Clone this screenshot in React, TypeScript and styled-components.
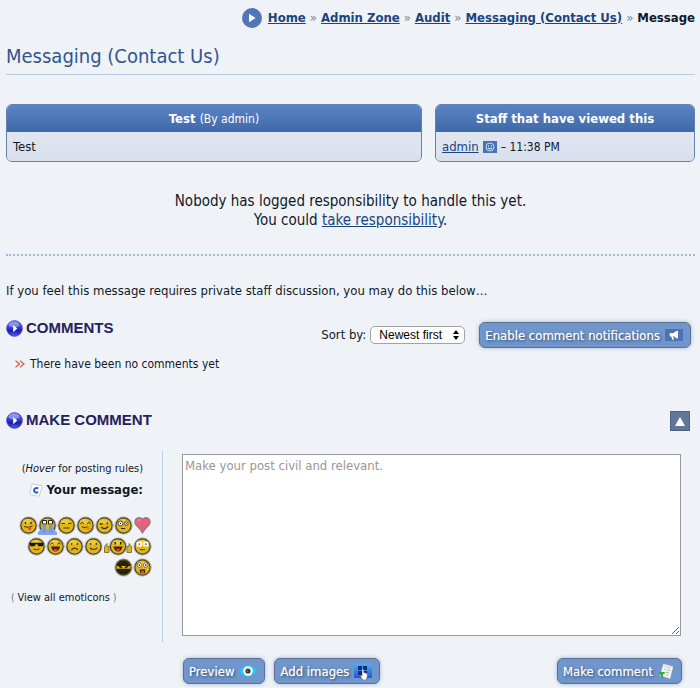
import React from "react";
import styled, { createGlobalStyle } from "styled-components";

const tahoma = `"DejaVu Sans Condensed", Tahoma, "Noto Sans", sans-serif`;
const arial = `"Liberation Sans", Arial, sans-serif`;

const GlobalStyle = createGlobalStyle`
  *, *::before, *::after { box-sizing: border-box; }
  body {
    margin: 0;
    background: #eff3f8;
    color: #111827;
    font-family: ${tahoma};
    font-size: 13px;
    line-height: 16px;
  }
  a { color: #1a4480; }
  svg { display: block; flex: none; }
`;

const Page = styled.main`
  padding: 7px 5px 3px 6px;
`;

const Breadcrumbs = styled.nav`
  display: flex;
  justify-content: flex-end;
  align-items: center;
  gap: 4px;
  height: 21px;
  font-size: 13px;
  font-weight: bold;
  white-space: nowrap;
`;

const CrumbIcon = styled.span`
  margin-right: 2px;
`;

const CrumbSeparator = styled.span`
  color: #81868f;
  font-weight: normal;
`;

const PageTitle = styled.h1`
  margin: 14px 0 0;
  height: 33px;
  border-bottom: 1px solid #bccce6;
  color: #335590;
  font-size: 20px;
  font-weight: normal;
  line-height: 29px;
`;

const Boxes = styled.div`
  display: grid;
  grid-template-columns: 8fr 5fr;
  gap: 13px;
  margin-top: 29px;
`;

const Box = styled.section`
  border: 1px solid #6580ac;
  border-radius: 6px;
  overflow: hidden;
`;

const BoxTitle = styled.h2`
  margin: 0;
  padding: 6px 6px 5px;
  background: linear-gradient(#5a84c5, #3f68a8);
  color: #fff;
  font-size: 13px;
  font-weight: bold;
  line-height: 16px;
  text-align: center;
`;

const Byline = styled.span`
  font-size: 12px;
  font-weight: normal;
  line-height: 1;
`;

const BoxBody = styled.div`
  display: flex;
  align-items: center;
  gap: 4px;
  padding: 7px 6px 6px;
  background: linear-gradient(#e1e7f1, #d9e0ed);
`;

const ViewedTime = styled.span`
  font-size: 12px;
`;

const Responsibility = styled.p`
  margin: 30px 0 0;
  padding-bottom: 24px;
  border-bottom: 2px dotted #9db7dd;
  font-size: 15px;
  line-height: 19px;
  text-align: center;
`;

const Intro = styled.p`
  margin: 27px 0 0;
`;

const SectionRow = styled.div<{ $top: number }>`
  display: flex;
  align-items: flex-start;
  justify-content: space-between;
  margin-top: ${(p) => p.$top}px;
  padding-right: 4px;
`;

const SectionTitle = styled.h3`
  display: flex;
  align-items: center;
  gap: 3px;
  margin: 0;
  color: #26205c;
  font-family: ${arial};
  font-size: 15px;
  line-height: 18px;
`;

const SortTools = styled.div`
  display: flex;
  align-items: center;
  gap: 4px;
  margin-top: 3px;
`;

const SelectWrap = styled.span`
  position: relative;
  margin-right: 10px;
  svg {
    position: absolute;
    right: 6px;
    top: 4px;
    pointer-events: none;
  }
`;

const SortSelect = styled.select`
  display: block;
  appearance: none;
  width: 95px;
  height: 18px;
  padding: 0 8px;
  border: 1px solid #a3a3a3;
  border-radius: 5px;
  background: #fff;
  color: #000;
  font-family: ${arial};
  font-size: 12px;
`;

const Button = styled.button`
  display: inline-flex;
  align-items: center;
  gap: 5px;
  height: 26px;
  padding: 0 7px 0 5px;
  border: 1px solid #5a7194;
  border-radius: 6px;
  background: #7096cc;
  box-shadow: 0 0 4px #a3b2c8;
  color: #fff;
  font-family: ${tahoma};
  font-size: 13px;
  text-shadow: 1px 1px 3px #20354f, 0 0 1px #fff;
  white-space: nowrap;
`;

const CommentNote = styled.p`
  display: flex;
  align-items: center;
  gap: 5px;
  margin: 8px 0 0 9px;
  font-size: 12px;
`;

const Toggle = styled.button`
  display: grid;
  place-items: center;
  width: 20px;
  height: 20px;
  margin-right: 1px;
  padding: 0;
  border: 1px solid #4c6084;
  background: #63779b;
`;

const Form = styled.form`
  display: grid;
  grid-template-columns: 157px 1fr;
  margin-top: 20px;
`;

const Side = styled.div`
  display: flex;
  flex-direction: column;
  height: 191px;
  padding: 10px 10px 0 5px;
  border-right: 1px solid #bccde6;
  text-align: right;
`;

const Rules = styled.div`
  padding-right: 9px;
  font-size: 11px;
`;

const MessageLabel = styled.div`
  display: flex;
  align-items: center;
  justify-content: flex-end;
  gap: 4px;
  margin-top: 5px;
  padding-right: 9px;
  font-size: 13px;
  font-weight: bold;
`;

const Emoticons = styled.div`
  display: flex;
  flex-direction: column;
  gap: 2px;
  margin-top: 18px;
`;

const EmoticonRow = styled.div`
  display: flex;
  justify-content: flex-end;
`;

const EmoticonButton = styled.button<{ $wide?: boolean }>`
  width: ${(p) => (p.$wide ? 30 : 19)}px;
  height: 19px;
  padding: 0;
  border: 0;
  background: none;
`;

const AllEmoticons = styled.div`
  margin-top: 13px;
  color: #6e737c;
  font-size: 10px;
  text-align: left;
  a {
    color: #111827;
    font-size: 11px;
    text-decoration: none;
  }
`;

const MessageArea = styled.div`
  padding: 3px 14px 0 19px;
`;

const Message = styled.textarea`
  display: block;
  width: 100%;
  height: 182px;
  padding: 3px 2px;
  border: 1px solid #999;
  background: #fff;
  font-family: ${tahoma};
  font-size: 13px;
  line-height: 16px;
  resize: both;
  &::placeholder {
    color: #979797;
    opacity: 1;
  }
`;

const Actions = styled.div`
  grid-column: 2;
  display: flex;
  gap: 9px;
  padding: 16px 13px 0 20px;
`;

const Submit = styled(Button)`
  margin-left: auto;
`;

function Orb() {
  return (
    <svg width="17" height="17" viewBox="0 0 17 17" aria-hidden="true">
      <defs>
        <linearGradient id="orb" x2="0" y2="1">
          <stop stopColor="#7880ef" />
          <stop offset=".45" stopColor="#3240d2" />
          <stop offset=".65" stopColor="#2019ae" />
          <stop offset="1" stopColor="#5561ee" />
        </linearGradient>
      </defs>
      <circle cx="8.5" cy="8.5" r="7.8" fill="url(#orb)" stroke="#2f29c4" strokeWidth=".8" />
      <ellipse cx="8" cy="4.5" rx="5.5" ry="3" fill="#b9c5ff" opacity=".5" />
      <path d="M7.2 4.9v7.4l4-3.7z" fill="#fff" />
    </svg>
  );
}

function Person() {
  return (
    <svg width="14" height="12" viewBox="0 0 14 12" aria-hidden="true">
      <path fill="#4a73b3" d="M0 0h14v12H0z" />
      <circle cx="7" cy="6" r="4" fill="none" stroke="#c8dafa" />
      <path d="M5 4.5h1v1H5zm3 0h1v1H8z" fill="#fff" />
      <path d="M4.8 7q2.2 2 4.4 0" fill="none" stroke="#fff" />
    </svg>
  );
}

function Megaphone() {
  return (
    <svg width="18" height="12" viewBox="0 0 18 12" aria-hidden="true">
      <path fill="#4c72b1" d="M0 0h18v12H0z" />
      <path fill="#fff" d="m4.5 4.2 4-.2 3.3-2.3 1.2.4v7.2l-1.2.2L9 7.2l-.8.1.8 3.2-1.8.2-.8-3.1-1.5-.2z" />
    </svg>
  );
}

function Eye() {
  return (
    <svg width="18" height="12" viewBox="0 0 18 12" aria-hidden="true">
      <path d="M0 6C5-1.5 13-1.5 18 6 13 13.5 5 13.5 0 6" fill="#1ccdfa" />
      <circle cx="9" cy="6" r="4.8" fill="#fff" />
      <circle cx="9" cy="6" r="2.6" fill="#343942" />
      <circle cx="8.5" cy="6" r="1" fill="#8d6045" />
    </svg>
  );
}

function AddPicture() {
  return (
    <svg width="18" height="17" viewBox="0 0 18 17" aria-hidden="true">
      <defs>
        <linearGradient id="picture" x2="0" y2="1">
          <stop stopColor="#53a9f5" />
          <stop offset="1" stopColor="#2058d0" />
        </linearGradient>
      </defs>
      <path fill="url(#picture)" d="M0 1h18v14H0z" />
      <path fill="#172b78" d="M4 3h4v4H4zm5 0h4v4H9zM4 8h4v4H4zm5 0h4v4H9z" />
      <path
        fill="#fff"
        stroke="#3b4254"
        strokeWidth=".5"
        d="M8 6.5q1-.9 1.8 0v3l3.5 1v3.2L12.2 17H8.8l-2.6-4q.6-1.2 1.8-.1z"
      />
    </svg>
  );
}

function PostPaper() {
  return (
    <svg width="16" height="17" viewBox="0 0 16 17" aria-hidden="true">
      <path d="m5.5 1 9.5 2.8-3 11.7-10-3z" fill="#f8faf8" stroke="#ccd2da" strokeWidth=".6" />
      <path
        d="m6.6 3.6 2 .5m1 .3 3 .8M6 6l1.5.4m1 .3 3.5 1M7.5 9l3.7 1M8 11.5l2.3.6"
        stroke="#a8adb5"
        fill="none"
      />
      <path d="M.5 8.8 7 9l-.6 2-1-.2q-.7 2-.4 4.8-2.2-2-2.5-4.2l-1.2-.2z" fill="#32ae3d" />
    </svg>
  );
}

function Comcode() {
  return (
    <svg width="14" height="15" viewBox="0 0 14 15" aria-hidden="true">
      <path d="m4 1 8 1.6q1.4.4 1 1.8l-2.4 7.8q-.4 1.2-1.8 1L2 11.6Q.6 11 1 9.8L2.6 2Q3 .9 4 1z" fill="#fff" stroke="#c9cbd0" />
      <path d="M9.3 5.6q-1.3-1-2.7-.5Q5 5.7 5 7.4q0 1.5 1.4 2 1.4.4 2.6-.3" fill="none" stroke="#1d5dbb" strokeWidth="1.9" />
    </svg>
  );
}

type Mood =
  | "cheeky" | "cry" | "dry" | "blush" | "wink" | "nerd" | "heart"
  | "cool" | "grin" | "sad" | "smile" | "thumbs" | "rolleyes" | "ninja" | "shocked";

const features: Record<Mood, React.ReactNode> = {
  cheeky: <><path d="M6.5 6v2m5.5-2v2" stroke="#282313" strokeWidth="1.4" /><path d="M5 10.5q4 2 8.5-.5" stroke="#473610" fill="none" /><path d="M9 11.2h3.2v2q-1.6 2-3.2 0z" fill="#e3483b" /></>,
  cry: <><path d="M0 19v-3l3.5-3h12l3.5 3v3z" fill="#8aa4df" /><path d="M4.5 4.5h4v3.5h-4zm6 0h4v3.5h-4z" fill="#fff" stroke="#282313" /><path d="M4.5 8.5h3.5V17H4zm6.5 0h3.5l.5 8.5h-4z" fill="#7398e5" /></>,
  dry: <path d="M4.5 7.5H8m3 0h3.5m-8 4.5h6" stroke="#493a0c" strokeWidth="1.2" />,
  blush: <><path d="M4.3 7.8q1.8-3 3.6 0m3.2 0q1.8-3 3.6 0M6 10.8q2.7 2 6 0" stroke="#493a0c" fill="none" /><circle cx="12.5" cy="12.5" r="2" fill="#ed8a25" /></>,
  wink: <><path d="M4.8 7.5q1.5 1.3 3 0m4.4-1v2m-6 2.8q3.7 3 7-1" stroke="#382b0a" fill="none" strokeWidth="1.2" /></>,
  nerd: <><circle cx="6.5" cy="7.5" r="2.5" fill="#fff" stroke="#494017" /><circle cx="12.3" cy="7.5" r="1.8" fill="#fff" stroke="#494017" /><path d="M6.5 6.8v1.4m5.8-1.2v1M7 12.5h4" stroke="#282313" /></>,
  heart: null,
  cool: <><path d="M2.5 6h14l-1 3h-4l-1-2h-2l-1 2h-4z" fill="#171710" stroke="#171710" strokeWidth=".5" /><path d="M6.5 12q3 1.5 6 0" stroke="#493a0c" fill="none" /></>,
  grin: <><path d="M4.3 7.3q1.7-3 3.4 0m3.6 0q1.7-3 3.4 0" stroke="#493a0c" fill="none" /><path d="M5 9.5h9q-1 5-4.5 5T5 9.5" fill="#521c0d" /><path d="M7.5 12h4l-1 2h-2z" fill="#ed493f" /></>,
  sad: <path d="M6.7 6v2m5.6-2v2m-6 5q3.4-3.6 6.6 0" stroke="#493a0c" fill="none" strokeWidth="1.2" />,
  smile: <path d="M6.7 6v2m5.6-2v2M6 11q3.6 3 7.2 0" stroke="#493a0c" fill="none" strokeWidth="1.2" />,
  thumbs: <><path d="M6.7 5v2.5M12.3 5v2.5" stroke="#282313" strokeWidth="1.5" /><path d="M5 9.5h9q-1 5-4.5 5T5 9.5" fill="#521c0d" /><path d="M7.5 11.8h4l-1 2h-2z" fill="#ed493f" /></>,
  rolleyes: <><path d="M3.5 4.7h5.3v4.8H3.5zm6.7 0h5.3v4.8h-5.3z" fill="#fff" /><path d="M5.7 7.2H7m5.2 0h1.3" stroke="#222" strokeWidth="1.3" /><path d="M7 12.7h5" stroke="#493a0c" /></>,
  ninja: <><path d="M2.5 8h14v2.8h-14z" fill="#d9aa2c" /><path d="m5 8 3 1.8M14 8l-3 1.8" stroke="#211b09" strokeWidth="1.5" /></>,
  shocked: <><circle cx="6.3" cy="7" r="2.3" fill="#fff" stroke="#544a1c" strokeWidth=".7" /><circle cx="12.7" cy="7" r="2.3" fill="#fff" stroke="#544a1c" strokeWidth=".7" /><path d="M6.3 6.3v1.5m6.4-1.5v1.5" stroke="#222" strokeWidth="1.4" /><path d="M6.8 11.3h5.4v4H6.8z" fill="#642112" /><path d="M8 12.8h3v2H8z" fill="#e2523d" /></>,
};

function Emoticon({ mood }: { mood: Mood }) {
  const wide = mood === "thumbs";
  if (mood === "heart") {
    return (
      <svg width="19" height="19" viewBox="0 0 19 19">
        <path d="M9.5 17Q7 12.5 3 9 .5 5.5 3.5 2.5q3.5-2.3 6 .8 2.5-3.1 6-.8 3 3 .5 6.5-4 3.5-6.5 8z" fill="#e9607a" stroke="#857f84" strokeWidth="1.2" />
        <path d="M4.5 5q1-2 3-.8" stroke="#ff9dac" fill="none" />
      </svg>
    );
  }
  return (
    <svg width={wide ? 30 : 19} height="19" viewBox={wide ? "-5.5 0 30 19" : "0 0 19 19"}>
      <circle cx="9.5" cy="9.5" r="9.2" fill="#a4a295" opacity=".65" />
      {wide && (
        <path d="M-4 9.5l2.5-3v3H.5v6H-4zm27 0-2.5-3v3h-2v6H23z" fill="#dfb51d" stroke="#827948" />
      )}
      <circle cx="9.5" cy="9.5" r="7.6" fill={mood === "ninja" ? "#2a210c" : "#dfb61d"} stroke="#4d461e" strokeWidth="1.2" />
      {mood !== "ninja" && <ellipse cx="8" cy="5.5" rx="4" ry="2.5" fill="#f1d343" opacity=".7" />}
      {features[mood]}
    </svg>
  );
}

const emoticonRows: Mood[][] = [
  ["cheeky", "cry", "dry", "blush", "wink", "nerd", "heart"],
  ["cool", "grin", "sad", "smile", "thumbs", "rolleyes"],
  ["ninja", "shocked"],
];

const crumbs = ["Home", "Admin Zone", "Audit", "Messaging (Contact Us)"];

export default function App() {
  return (
    <>
      <GlobalStyle />
      <Page>
        <Breadcrumbs aria-label="Breadcrumb">
          <CrumbIcon>
            <svg width="20" height="20" viewBox="0 0 20 20" aria-hidden="true">
              <circle cx="10" cy="10" r="10" fill="#5078b7" />
              <path d="M7 5.8v8.4l6.5-4.2z" fill="#fff" />
            </svg>
          </CrumbIcon>
          {crumbs.map((crumb) => (
            <React.Fragment key={crumb}>
              <a href="#">{crumb}</a>
              <CrumbSeparator>»</CrumbSeparator>
            </React.Fragment>
          ))}
          <span>Message</span>
        </Breadcrumbs>

        <PageTitle>Messaging (Contact Us)</PageTitle>

        <Boxes>
          <Box>
            <BoxTitle>Test <Byline>(By admin)</Byline></BoxTitle>
            <BoxBody>Test</BoxBody>
          </Box>
          <Box>
            <BoxTitle>Staff that have viewed this</BoxTitle>
            <BoxBody>
              <a href="#">admin</a>
              <Person />
              <ViewedTime>– 11:38 PM</ViewedTime>
            </BoxBody>
          </Box>
        </Boxes>

        <Responsibility>
          Nobody has logged responsibility to handle this yet.
          <br />
          You could <a href="#">take responsibility</a>.
        </Responsibility>

        <Intro>If you feel this message requires private staff discussion, you may do this below…</Intro>

        <SectionRow $top={20}>
          <SectionTitle><Orb />COMMENTS</SectionTitle>
          <SortTools>
            <label htmlFor="sort">Sort by:</label>
            <SelectWrap>
              <SortSelect id="sort" defaultValue="newest">
                <option value="newest">Newest first</option>
                <option value="oldest">Oldest first</option>
              </SortSelect>
              <svg width="6" height="10" viewBox="0 0 6 10" aria-hidden="true">
                <path d="M0 4 3 0l3 4zm0 2 3 4 3-4z" />
              </svg>
            </SelectWrap>
            <Button type="button">Enable comment notifications <Megaphone /></Button>
          </SortTools>
        </SectionRow>

        <CommentNote>
          <svg width="10" height="8" viewBox="0 0 10 8" aria-hidden="true">
            <path d="m.5.8 4 3.2-4 3.2M5 .8 9 4 5 7.2" fill="none" stroke="#d5604c" strokeWidth="1.3" />
          </svg>
          There have been no comments yet
        </CommentNote>

        <SectionRow $top={39}>
          <SectionTitle><Orb />MAKE COMMENT</SectionTitle>
          <Toggle type="button" aria-label="Collapse">
            <svg width="10" height="9" viewBox="0 0 10 9"><path d="m5 0 5 9H0z" fill="#fff" /></svg>
          </Toggle>
        </SectionRow>

        <Form onSubmit={(e) => e.preventDefault()}>
          <Side>
            <Rules>(<em>Hover</em> for posting rules)</Rules>
            <MessageLabel>
              <Comcode />
              <label htmlFor="message">Your message:</label>
            </MessageLabel>
            <Emoticons>
              {emoticonRows.map((row) => (
                <EmoticonRow key={row[0]}>
                  {row.map((mood) => (
                    <EmoticonButton key={mood} type="button" aria-label={mood} $wide={mood === "thumbs"}>
                      <Emoticon mood={mood} />
                    </EmoticonButton>
                  ))}
                </EmoticonRow>
              ))}
            </Emoticons>
            <AllEmoticons>( <a href="#">View all emoticons</a> )</AllEmoticons>
          </Side>
          <MessageArea>
            <Message id="message" placeholder="Make your post civil and relevant." />
          </MessageArea>
          <Actions>
            <Button type="button">Preview <Eye /></Button>
            <Button type="button">Add images <AddPicture /></Button>
            <Submit type="submit">Make comment <PostPaper /></Submit>
          </Actions>
        </Form>
      </Page>
    </>
  );
}
